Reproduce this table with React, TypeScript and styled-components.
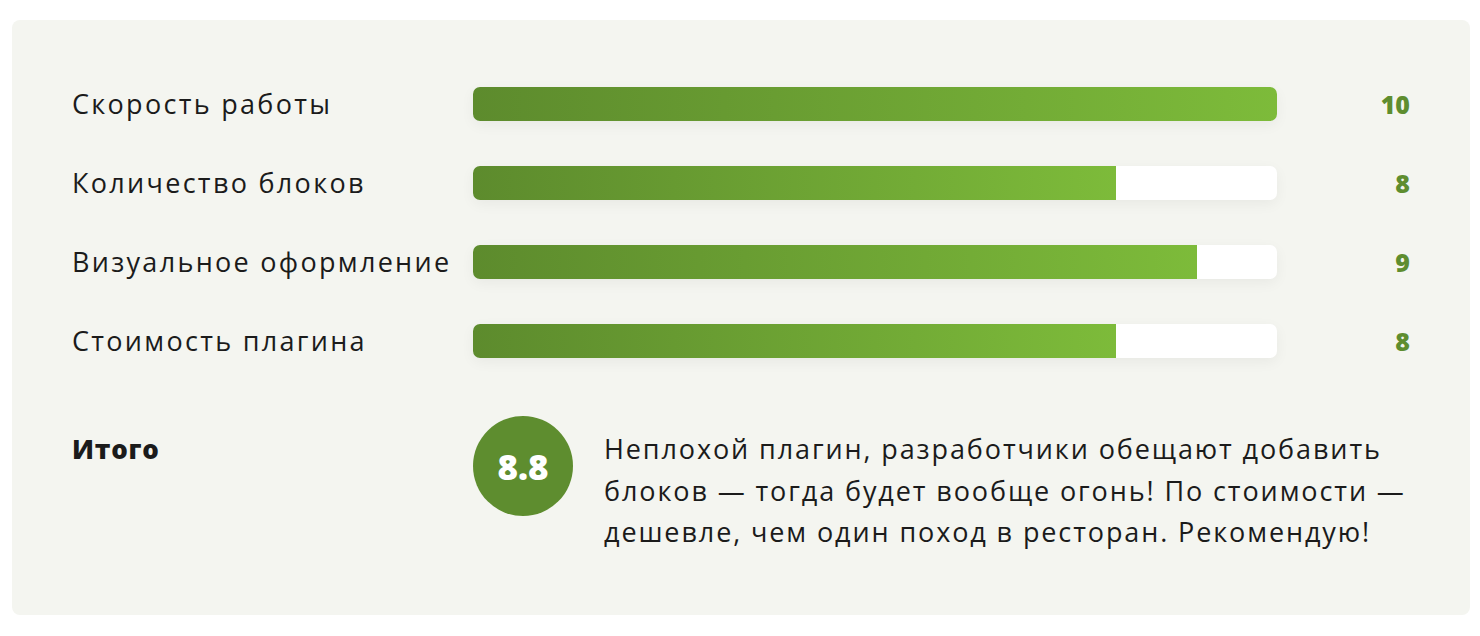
import styled, { createGlobalStyle } from "styled-components";

interface Score {
  label: string;
  value: number;
}

const scores: Score[] = [
  { label: "Скорость работы", value: 10 },
  { label: "Количество блоков", value: 8 },
  { label: "Визуальное оформление", value: 9 },
  { label: "Стоимость плагина", value: 8 },
];

const GlobalStyle = createGlobalStyle`
  body {
    margin: 0;
    background: #fff;
    font-family: "Open Sans", "Noto Sans", sans-serif;
    color: #1b1b1b;
  }
`;

const App = () => {
  return (
    <>
      <GlobalStyle />
      <Card>
        <Rows>
          {scores.map((s) => (
            <Row key={s.label}>
              <Label>{s.label}</Label>
              <Track>
                <Fill style={{ width: `${s.value * 10}%` }} />
              </Track>
              <Value>{s.value}</Value>
            </Row>
          ))}
        </Rows>

        <Summary>
          <Total>Итого</Total>
          <Badge>8.8</Badge>
          <Verdict>
            Неплохой плагин, разработчики обещают добавить
            <br />
            блоков — тогда будет вообще огонь! По стоимости —
            <br />
            дешевле, чем один поход в ресторан. Рекомендую!
          </Verdict>
        </Summary>
      </Card>
    </>
  );
};

const Card = styled.div`
  margin: 20px 10px 0 12px;
  padding: 67px 60px 62px;
  background: #f4f5f0;
  border-radius: 8px;
`;

const Rows = styled.div`
  display: flex;
  flex-direction: column;
  gap: 45px;
`;

const Row = styled.div`
  display: grid;
  grid-template-columns: 401px 804px 1fr;
  align-items: center;
  height: 34px;
`;

const Label = styled.span`
  font-size: 27px;
  line-height: 34px;
  letter-spacing: 0.085em;
  white-space: nowrap;
`;

const Track = styled.div`
  height: 34px;
  background: #fff;
  border-radius: 7px;
  overflow: hidden;
  box-shadow: 0 4px 14px rgba(0, 0, 0, 0.05);
`;

const Fill = styled.div`
  height: 100%;
  background: linear-gradient(90deg, #5d8b2d 0%, #7dbb3a 100%);
`;

const Value = styled.span`
  justify-self: end;
  font-size: 25px;
  line-height: 34px;
  font-weight: 800;
  color: #5e8d2f;
`;

const Summary = styled.div`
  display: grid;
  grid-template-columns: 401px 131px 1fr;
  align-items: start;
  margin-top: 58px;
`;

const Total = styled.span`
  font-size: 26px;
  font-weight: 800;
  line-height: 42px;
  margin-top: 12px;
  letter-spacing: 0.03em;
`;

const Badge = styled.div`
  width: 100px;
  height: 100px;
  border-radius: 50%;
  background: #5e8d2f;
  color: #fff;
  font-size: 35px;
  font-weight: 800;
  display: flex;
  align-items: center;
  justify-content: center;
`;

const Verdict = styled.p`
  margin: 12px 0 0;
  font-size: 27px;
  line-height: 41.5px;
  letter-spacing: 0.07em;
  white-space: nowrap;
`;

export default App;
